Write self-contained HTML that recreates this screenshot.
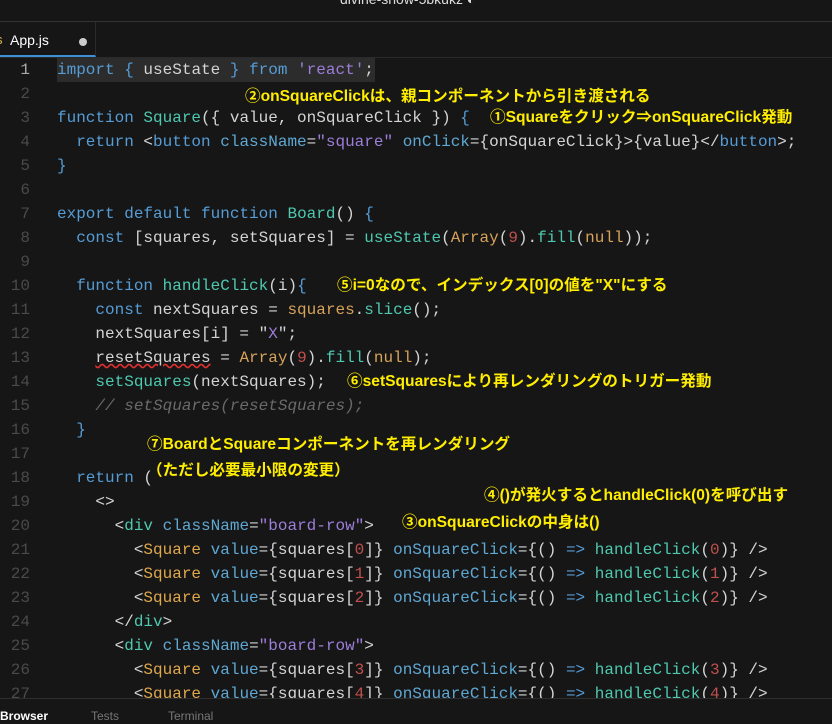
<!DOCTYPE html>
<html><head><meta charset="utf-8"><style>
body{margin:0;width:832px;height:723px;background:#161616;overflow:hidden;position:relative;font-family:"Liberation Sans",sans-serif}
.title{position:absolute;top:-9px;left:340px;color:#ddd;font-size:14px}
.hl{position:absolute;top:21px;left:0;width:832px;height:1px;background:#333}
.tab{position:absolute;top:22px;left:0;width:96px;height:35px;border-right:1px solid #2a2a2a;border-bottom:2px solid #3d8fd6;box-sizing:border-box;color:#fff;font-size:14px}
.tabline{position:absolute;top:57px;left:0;width:832px;height:1px;background:#2a2a2a}
.code{position:absolute;top:58px;left:0;width:832px;height:640px;overflow:hidden;font-family:"Liberation Mono",monospace;font-size:16px;color:#d4d4d4}
.l{position:absolute;left:0;height:24px;line-height:24px;white-space:pre;width:832px}
.n{display:inline-block;width:30px;text-align:right;color:#4a4a4a;margin-right:27px}
.k{color:#569cd6}.f{color:#4ec9b0}.s{color:#9c7ed9}.t{color:#e0a84e}.a{color:#5fa8d3}.d{color:#c0504d}.c{color:#6a6a6a;font-style:italic}.o{color:#d7a35a}
.ann{position:absolute;color:#ffee00;font-weight:bold;font-size:15.6px;font-family:"Liberation Sans","Noto Sans CJK JP",sans-serif;white-space:nowrap;line-height:20px}
.bottom{position:absolute;top:698px;left:0;width:832px;height:25px;background:#161616;border-top:1px solid #2e2e2e;font-size:12px}
</style></head><body>
<div class="title">divine-snow-5bkukz ◐</div>
<div class="hl"></div>
<div class="tab"><span style="position:absolute;left:-4px;top:10px;color:#e6c34a;font-size:13px">s</span><span style="position:absolute;left:10px;top:10px">App.js</span><span style="position:absolute;left:79px;top:16px;width:8px;height:8px;border-radius:50%;background:#ccc"></span></div>
<div class="tabline"></div>
<div class="code">
<div class="l" style="top:0;background:#2c2c2c;left:57px;width:318px"></div>
<div class="l" style="top:0"><span class="n" style="color:#aaa">1</span><span class="k">import</span> <span class="k">{</span> useState <span class="k">}</span> <span class="k">from</span> <span class="s">'react'</span>;</div>
<div class="l" style="top:24px"><span class="n">2</span></div>
<div class="l" style="top:48px"><span class="n">3</span><span class="k">function</span> <span class="f">Square</span>({ value, onSquareClick }) <span class="k">{</span></div>
<div class="l" style="top:72px"><span class="n">4</span>  <span class="k">return</span> &lt;<span class="k">button</span> <span class="a">className</span>=<span class="s">"square"</span> <span class="a">onClick</span>={onSquareClick}&gt;{value}&lt;/<span class="k">button</span>&gt;;</div>
<div class="l" style="top:96px"><span class="n">5</span><span class="k">}</span></div>
<div class="l" style="top:120px"><span class="n">6</span></div>
<div class="l" style="top:144px"><span class="n">7</span><span class="k">export</span> <span class="k">default</span> <span class="k">function</span> <span class="f">Board</span>() <span class="k">{</span></div>
<div class="l" style="top:168px"><span class="n">8</span>  <span class="k">const</span> [squares, setSquares] = <span class="f">useState</span>(<span class="o">Array</span>(<span class="d">9</span>).<span class="f">fill</span>(<span class="o">null</span>));</div>
<div class="l" style="top:192px"><span class="n">9</span></div>
<div class="l" style="top:216px"><span class="n">10</span>  <span class="k">function</span> <span class="f">handleClick</span>(i)<span class="k">{</span></div>
<div class="l" style="top:240px"><span class="n">11</span>    <span class="k">const</span> nextSquares = <span class="o">squares</span>.<span class="f">slice</span>();</div>
<div class="l" style="top:264px"><span class="n">12</span>    nextSquares[i] = "<span class="s">X</span>";</div>
<div class="l" style="top:288px"><span class="n">13</span>    <span style="text-decoration:underline wavy #e03030">resetSquares</span> = <span class="o">Array</span>(<span class="d">9</span>).<span class="f">fill</span>(<span class="o">null</span>);</div>
<div class="l" style="top:312px"><span class="n">14</span>    <span class="f">setSquares</span>(nextSquares);</div>
<div class="l" style="top:336px"><span class="n">15</span>    <span class="c">// setSquares(resetSquares);</span></div>
<div class="l" style="top:360px"><span class="n">16</span>  <span class="k">}</span></div>
<div class="l" style="top:384px"><span class="n">17</span></div>
<div class="l" style="top:408px"><span class="n">18</span>  <span class="k">return</span> (</div>
<div class="l" style="top:432px"><span class="n">19</span>    &lt;&gt;</div>
<div class="l" style="top:456px"><span class="n">20</span>      &lt;<span class="f">div</span> <span class="a">className</span>=<span class="s">"board-row"</span>&gt;</div>
<div class="l" style="top:480px"><span class="n">21</span>        &lt;<span class="t">Square</span> <span class="a">value</span>={squares[<span class="d">0</span>]} <span class="a">onSquareClick</span>={() <span class="k">=&gt;</span> <span class="f">handleClick</span>(<span class="d">0</span>)} /&gt;</div>
<div class="l" style="top:504px"><span class="n">22</span>        &lt;<span class="t">Square</span> <span class="a">value</span>={squares[<span class="d">1</span>]} <span class="a">onSquareClick</span>={() <span class="k">=&gt;</span> <span class="f">handleClick</span>(<span class="d">1</span>)} /&gt;</div>
<div class="l" style="top:528px"><span class="n">23</span>        &lt;<span class="t">Square</span> <span class="a">value</span>={squares[<span class="d">2</span>]} <span class="a">onSquareClick</span>={() <span class="k">=&gt;</span> <span class="f">handleClick</span>(<span class="d">2</span>)} /&gt;</div>
<div class="l" style="top:552px"><span class="n">24</span>      &lt;/<span class="f">div</span>&gt;</div>
<div class="l" style="top:576px"><span class="n">25</span>      &lt;<span class="f">div</span> <span class="a">className</span>=<span class="s">"board-row"</span>&gt;</div>
<div class="l" style="top:600px"><span class="n">26</span>        &lt;<span class="t">Square</span> <span class="a">value</span>={squares[<span class="d">3</span>]} <span class="a">onSquareClick</span>={() <span class="k">=&gt;</span> <span class="f">handleClick</span>(<span class="d">3</span>)} /&gt;</div>
<div class="l" style="top:624px"><span class="n">27</span>        &lt;<span class="t">Square</span> <span class="a">value</span>={squares[<span class="d">4</span>]} <span class="a">onSquareClick</span>={() <span class="k">=&gt;</span> <span class="f">handleClick</span>(<span class="d">4</span>)} /&gt;</div>
</div>
<div class="ann" style="left:245px;top:87px">②onSquareClickは、親コンポーネントから引き渡される</div>
<div class="ann" style="left:490px;top:108px">①Squareをクリック⇒onSquareClick発動</div>
<div class="ann" style="left:337px;top:276px">⑤i=0なので、インデックス[0]の値を"X"にする</div>
<div class="ann" style="left:347px;top:372px">⑥setSquaresにより再レンダリングのトリガー発動</div>
<div class="ann" style="left:147px;top:435px">⑦BoardとSquareコンポーネントを再レンダリング</div>
<div class="ann" style="left:147px;top:461px">（ただし必要最小限の変更）</div>
<div class="ann" style="left:484px;top:486px">④()が発火するとhandleClick(0)を呼び出す</div>
<div class="ann" style="left:402px;top:513px">③onSquareClickの中身は()</div>
<div class="bottom"><span style="position:absolute;left:0;top:10px;color:#fff;font-weight:bold">Browser</span><span style="position:absolute;left:91px;top:10px;color:#777">Tests</span><span style="position:absolute;left:168px;top:10px;color:#777">Terminal</span></div>
</body></html>
